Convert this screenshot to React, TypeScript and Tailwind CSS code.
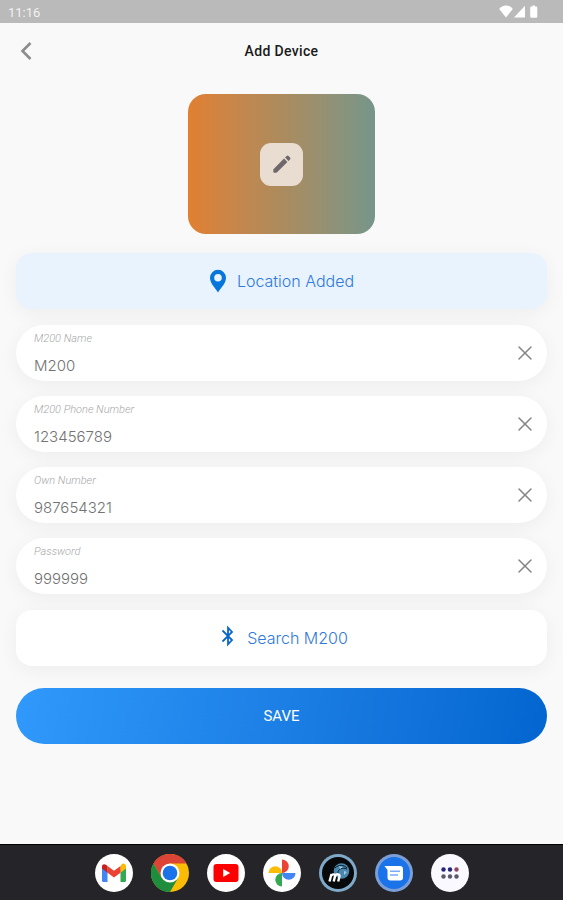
import { useState } from "react";
import { X } from "lucide-react";

interface Field {
  id: string;
  label: string;
  inputMode: "text" | "tel" | "numeric";
}

const fields: Field[] = [
  { id: "name", label: "M200 Name", inputMode: "text" },
  { id: "phone", label: "M200 Phone Number", inputMode: "tel" },
  { id: "ownNumber", label: "Own Number", inputMode: "tel" },
  { id: "password", label: "Password", inputMode: "numeric" },
];

function StatusBar() {
  return (
    <div className="h-[23px] bg-[#bababa] pl-2 pr-6 flex items-center justify-between text-white">
      <span className="text-[13px] leading-4 pt-0.5 opacity-80">11:16</span>
      <div className="flex items-center">
        <svg width="14" height="13" viewBox="0 0 14 13" fill="currentColor">
          <path d="M7 12.5 .6 4.6C.2 4 .4 3.500.9 3 2.500 1.400 4.600.5 7 .5s4.500.9 6.100 2.500c.5.5.7 1 .3 1.600z" />
        </svg>
        <svg width="13" height="13" viewBox="0 0 13 13" fill="currentColor">
          <path d="M12 .8v11.700H1z" />
        </svg>
        <svg width="13" height="13" viewBox="0 0 13 13" fill="currentColor">
          <path d="M6.500.5h2.500v1H10q1.300 0 1.300 1.300V11.500q0 1.200-1.200 1.200H5.400q-1.200 0-1.200-1.200V2.800q0-1.300 1.300-1.300h1z" />
        </svg>
      </div>
    </div>
  );
}

function PencilIcon() {
  return (
    <svg width="24" height="24" viewBox="0 0 24 24" fill="currentColor">
      <path d="M3.300 17.800q0-.5.400-.9L14 6.600l3.400 3.400L7.100 20.300q-.4.400-.9.400H4.300q-1 0-1-1z" />
      <path d="m15.100 5.500 1.500-1.500q1-1 2 0L20 5.400q1 1 0 2l-1.500 1.500z" />
    </svg>
  );
}

function PinIcon() {
  return (
    <svg width="18" height="24" viewBox="0 0 18 24">
      <path
        d="M9 .8a8 8 0 0 0-8 8c0 5.600 5.200 10.200 8 14.700 2.800-4.500 8-9.100 8-14.700a8 8 0 0 0-8-8zm0 4.200a3.800 3.800 0 1 1 0 7.600A3.800 3.800 0 0 1 9 5z"
        fill="#0675dc"
        fillRule="evenodd"
      />
    </svg>
  );
}

function BluetoothIcon() {
  return (
    <svg width="24" height="24" viewBox="0 0 24 24" fill="none" stroke="#0a66cc" strokeWidth="1.800" className="mb-1">
      <path d="m7.500 6.500 9.500 9.500-4 4.300V3.700l4 4.300-9.500 9.500" />
    </svg>
  );
}

function GmailIcon() {
  return (
    <svg viewBox="0 0 38 38" className="size-full">
      <circle cx="19" cy="19" r="19" fill="#fff" />
      <path d="M7 12v14.500q0 1.500 1.500 1.500h4V16z" fill="#4285f4" />
      <path d="M31 12v14.500q0 1.500-1.500 1.500h-4V16z" fill="#34a853" />
      <path d="M25.500 12v6.800L31 14.500v-2.200c0-2.500-2.600-3.500-4.300-2.200z" fill="#fbbc04" />
      <path d="M12.500 18.800V12l6.500 4.800 6.500-4.800v6.800L19 23.500z" fill="#ea4335" />
      <path d="M7 12.300v2.200l5.500 4.300V12l-1.200-1C9.600 9.700 7 10 7 12.300z" fill="#c5221f" />
    </svg>
  );
}

function ChromeIcon() {
  return (
    <svg viewBox="0 0 38 38" className="size-full">
      <circle cx="19" cy="19" r="19" fill="#fbbc05" />
      <path d="M2.500 9.500A19 19 0 0 1 35.500 9.500H19L10.800 23.700z" fill="#db4437" />
      <path d="M2.500 9.500A19 19 0 0 0 19 38L27.200 23.700 19 19 10.800 23.700z" fill="#1e8e3e" />
      <circle cx="19" cy="19" r="9.500" fill="#fff" />
      <circle cx="19" cy="19" r="7.300" fill="#1a73e8" />
    </svg>
  );
}

function YoutubeIcon() {
  return (
    <svg viewBox="0 0 38 38" className="size-full">
      <circle cx="19" cy="19" r="19" fill="#fff" />
      <rect x="6.500" y="10" width="25" height="18" rx="3" fill="#f00" />
      <path d="M16.200 15v8l7-4z" fill="#fff" />
    </svg>
  );
}

function PhotosIcon() {
  return (
    <svg viewBox="0 0 38 38" className="size-full">
      <circle cx="19" cy="19" r="19" fill="#fff" />
      <path d="M19 5.500a6.700 6.700 0 0 1 0 13.500z" fill="#ea4335" />
      <path d="M32.500 19a6.700 6.700 0 0 1-13.500 0z" fill="#4285f4" />
      <path d="M19 32.500a6.700 6.700 0 0 1 0-13.500z" fill="#34a853" />
      <path d="M5.500 19a6.700 6.700 0 0 1 13.500 0z" fill="#fbbc04" />
    </svg>
  );
}

function DeviceAppIcon() {
  return (
    <svg viewBox="0 0 38 38" className="size-full">
      <circle cx="19" cy="19" r="19" fill="#7fa9c8" />
      <circle cx="19" cy="19" r="16" fill="#08090b" />
      <circle cx="22.500" cy="17" r="7.800" fill="#4a87ae" />
      <path d="M16 14c4-4 9-3 12 0M19 19c0-4 4-6 9-4" fill="none" stroke="#0b1c28" strokeWidth="1" />
      <path d="m20 12 4 1-3 2zM25 17l3 1-3 3z" fill="#a4c9de" />
      <path
        d="M10.500 27.500l2-7.500M12.200 21.500c2-1.800 4.300-1.300 3.800.9L14.700 27.500M16 21.800c2-2.300 5-1.800 4.400.7L19.200 27.500"
        fill="none"
        stroke="#fff"
        strokeWidth="2.400"
      />
    </svg>
  );
}

function MessagesIcon() {
  return (
    <svg viewBox="0 0 38 38" className="size-full">
      <circle cx="19" cy="19" r="19" fill="#7c9ed6" />
      <circle cx="19" cy="19" r="16" fill="#1a73e8" />
      <path d="M9.500 12H25q3 0 3 3v8.500q0 3-3 3H15.500q-3 0-3-3V16z" fill="#fff" />
      <path d="M15 17.300h10M15 21h8" stroke="#7baaf7" strokeWidth="1.600" />
    </svg>
  );
}

function AllAppsIcon() {
  return (
    <svg viewBox="0 0 38 38" className="size-full">
      <circle cx="19" cy="19" r="19" fill="#faf9ff" />
      <circle cx="12.500" cy="15.500" r="2.200" fill="#25257d" />
      <circle cx="19" cy="15.500" r="2.200" fill="#25257d" />
      <circle cx="25.500" cy="15.500" r="2.200" fill="#8d4a63" />
      <circle cx="12.500" cy="22.500" r="2.200" fill="#5c5a68" />
      <circle cx="19" cy="22.500" r="2.200" fill="#5c5a68" />
      <circle cx="25.500" cy="22.500" r="2.200" fill="#5c5a68" />
    </svg>
  );
}

const dockApps = [
  { name: "Gmail", Icon: GmailIcon },
  { name: "Chrome", Icon: ChromeIcon },
  { name: "YouTube", Icon: YoutubeIcon },
  { name: "Photos", Icon: PhotosIcon },
  { name: "M200", Icon: DeviceAppIcon },
  { name: "Messages", Icon: MessagesIcon },
  { name: "All apps", Icon: AllAppsIcon },
];

export default function App() {
  const [values, setValues] = useState<Record<string, string>>({
    name: "M200",
    phone: "123456789",
    ownNumber: "987654321",
    password: "999999",
  });

  const setValue = (id: string, value: string) => {
    setValues(prev => ({ ...prev, [id]: value }));
  };

  return (
    <div className="min-h-screen bg-[#f9f9f9] font-['Roboto',sans-serif] flex flex-col">
      <StatusBar />

      {/* Header */}
      <header className="h-14 px-4 grid grid-cols-[1fr_auto_1fr] items-center">
        <button aria-label="Back" className="size-6 text-[#8c8c8c]">
          <svg width="24" height="24" viewBox="0 0 24 24" fill="none" stroke="currentColor" strokeWidth="2.600">
            <path d="m14.500 4-8 8 8 8" />
          </svg>
        </button>
        <h1 className="text-sm font-medium tracking-wide text-[#1a1a1a]">Add Device</h1>
      </header>

      <form className="px-4 pt-[15px] pb-8 flex flex-col" onSubmit={e => e.preventDefault()}>
        {/* Device picture */}
        <div className="w-[187px] h-[140px] self-center rounded-[18px] bg-linear-to-r from-[#e17f30] via-[#ac8b5d] to-[#75968a] flex items-center justify-center">
          <button
            type="button"
            aria-label="Edit picture"
            className="size-[43px] rounded-[11px] bg-[#e8ddd0] text-[#6f676b] flex items-center justify-center"
          >
            <PencilIcon />
          </button>
        </div>

        <button
          type="button"
          className="mt-[19px] h-14 rounded-2xl bg-[#e8f3fe] shadow-[0_4px_20px_rgba(0,0,0,0.05)] flex items-center justify-center gap-2.5 font-['Inter',sans-serif] font-light text-base text-[#2f78dc]"
        >
          <PinIcon />
          Location Added
        </button>

        {/* Fields */}
        <div className="my-4 flex flex-col gap-[15px]">
          {fields.map(field => (
            <div
              key={field.id}
              className="h-14 rounded-full bg-white shadow-[0_4px_20px_rgba(0,0,0,0.05)] pl-[18px] pr-2.5 flex items-center"
            >
              <div className="flex-1 min-w-0 pt-0.5 flex flex-col gap-1.5">
                <label
                  htmlFor={field.id}
                  className="text-[11px] leading-4 italic font-light text-[#a8a8a8]"
                >
                  {field.label}
                </label>
                <input
                  id={field.id}
                  type="text"
                  inputMode={field.inputMode}
                  value={values[field.id]}
                  onChange={e => setValue(field.id, e.target.value)}
                  className="w-full h-6 bg-transparent outline-none font-['Inter',sans-serif] font-light text-[15px] text-[#737373]"
                />
              </div>
              <button
                type="button"
                aria-label={`Clear ${field.label}`}
                onClick={() => setValue(field.id, "")}
                className="text-[#858585]"
              >
                <X size={24} strokeWidth={1.5} />
              </button>
            </div>
          ))}
        </div>

        <button
          type="button"
          className="h-14 rounded-2xl bg-white shadow-[0_4px_20px_rgba(0,0,0,0.05)] flex items-center justify-center gap-2 font-['Inter',sans-serif] font-light text-base text-[#2f78dc]"
        >
          <BluetoothIcon />
          Search M200
        </button>

        <button
          type="submit"
          className="mt-[22px] h-14 rounded-full bg-linear-100 from-[#3099fb] to-[#0365cf] text-white text-[15px]"
        >
          SAVE
        </button>
      </form>

      {/* Dock */}
      <nav className="mt-auto h-14 bg-[#252529] border-t border-black flex items-center justify-center gap-[18px]">
        {dockApps.map(({ name, Icon }) => (
          <button key={name} aria-label={name} className="size-[38px] rounded-full">
            <Icon />
          </button>
        ))}
      </nav>
    </div>
  );
}
